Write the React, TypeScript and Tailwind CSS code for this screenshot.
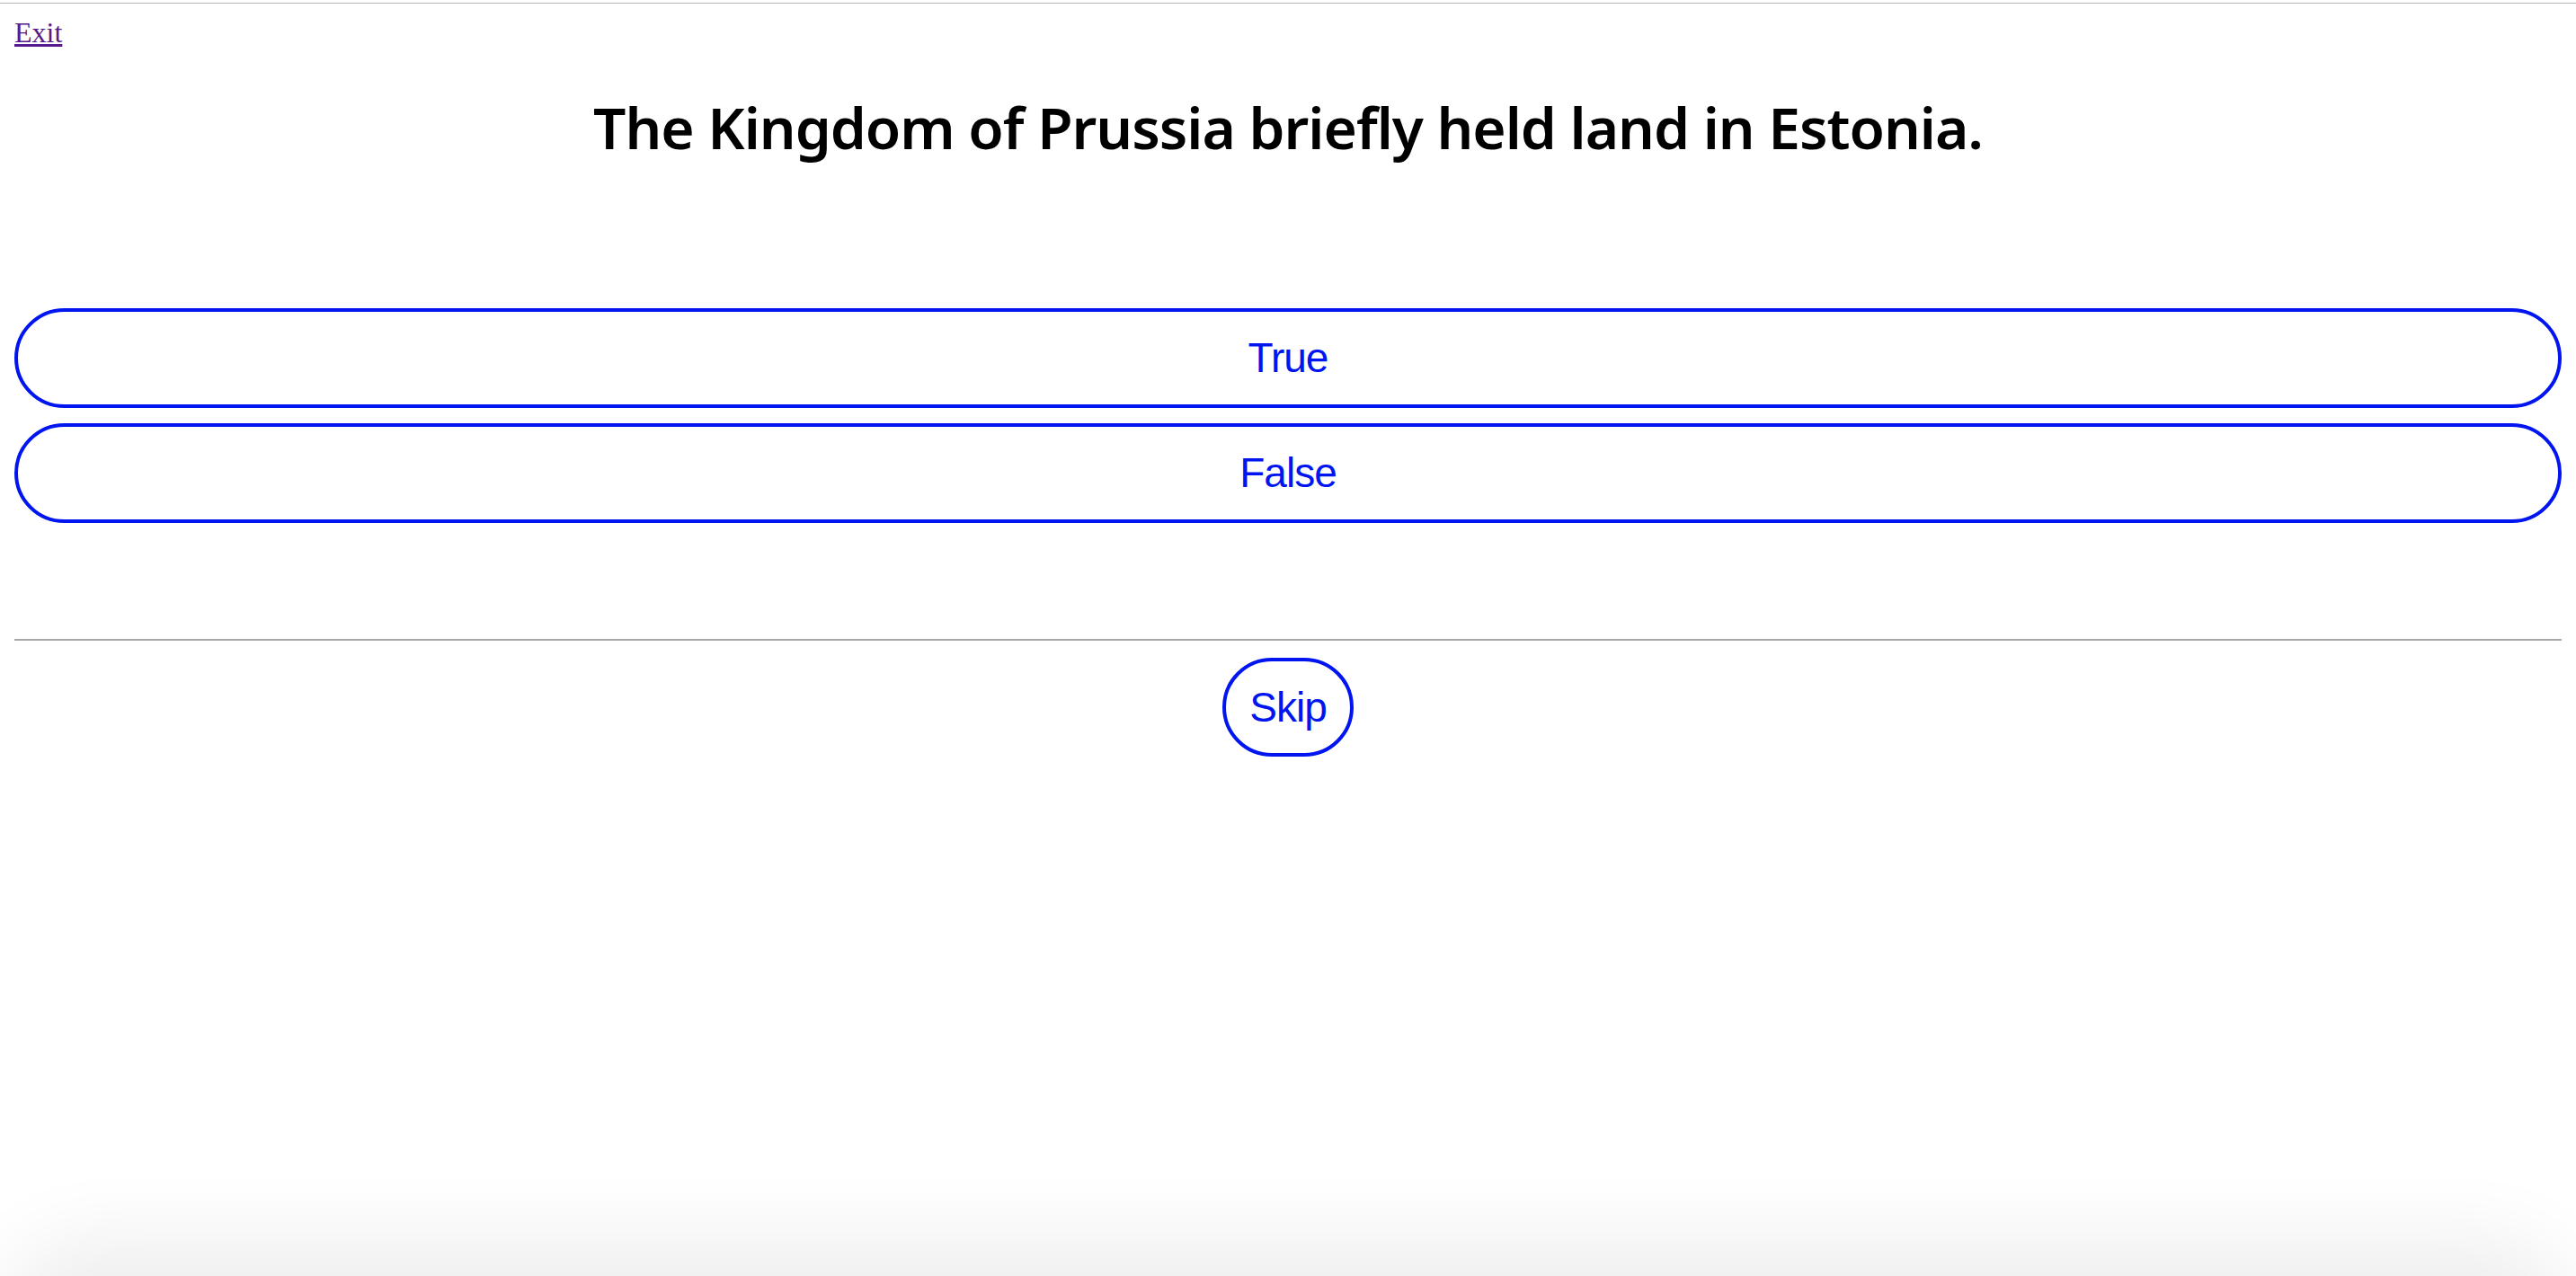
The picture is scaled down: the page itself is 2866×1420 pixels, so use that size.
import React from 'react';

const answers = ['True', 'False'];

export default function App() {
  return (
    <div className="relative min-h-screen overflow-hidden bg-white font-['Liberation_Serif',serif]">
      <div className="mt-[3px] h-px bg-[#b4b4b4]" />
      <div className="px-4 pt-[8px]">
        <div className="text-[32px]">
          <a href="#" className="text-[#551a8b] underline">
            Exit
          </a>
        </div>

        <h1 className="mt-[48px] text-center font-['Noto_Sans',sans-serif] text-[64px] font-semibold leading-[68px] tracking-[-1px] text-black">
          The Kingdom of Prussia briefly held land in Estonia.
        </h1>

        <div className="mt-[167px] flex flex-col gap-[17px]">
          {answers.map((a) => (
            <button
              key={a}
              className="h-[111px] w-full rounded-full border-[4px] border-[#0015f0] bg-white font-['Liberation_Sans',sans-serif] text-[46px] tracking-[-1px] text-[#0015f0]"
            >
              {a}
            </button>
          ))}
        </div>

        <div className="mt-[129px] h-[2px] bg-[#a8a8a8]" />

        <div className="mt-[19px] flex justify-center">
          <button className="h-[110px] w-[146px] rounded-full border-[4px] border-[#0015f0] bg-white font-['Liberation_Sans',sans-serif] text-[46px] tracking-[-1px] text-[#0015f0]">
            Skip
          </button>
        </div>
      </div>

      {/* sheet peeking from below the fold */}
      <div className="pointer-events-none fixed bottom-[-200px] left-[40px] right-[40px] h-[200px] rounded-[60px] bg-[#efefef] shadow-[0_0_90px_40px_rgba(0,0,0,0.07)]" />
    </div>
  );
}
